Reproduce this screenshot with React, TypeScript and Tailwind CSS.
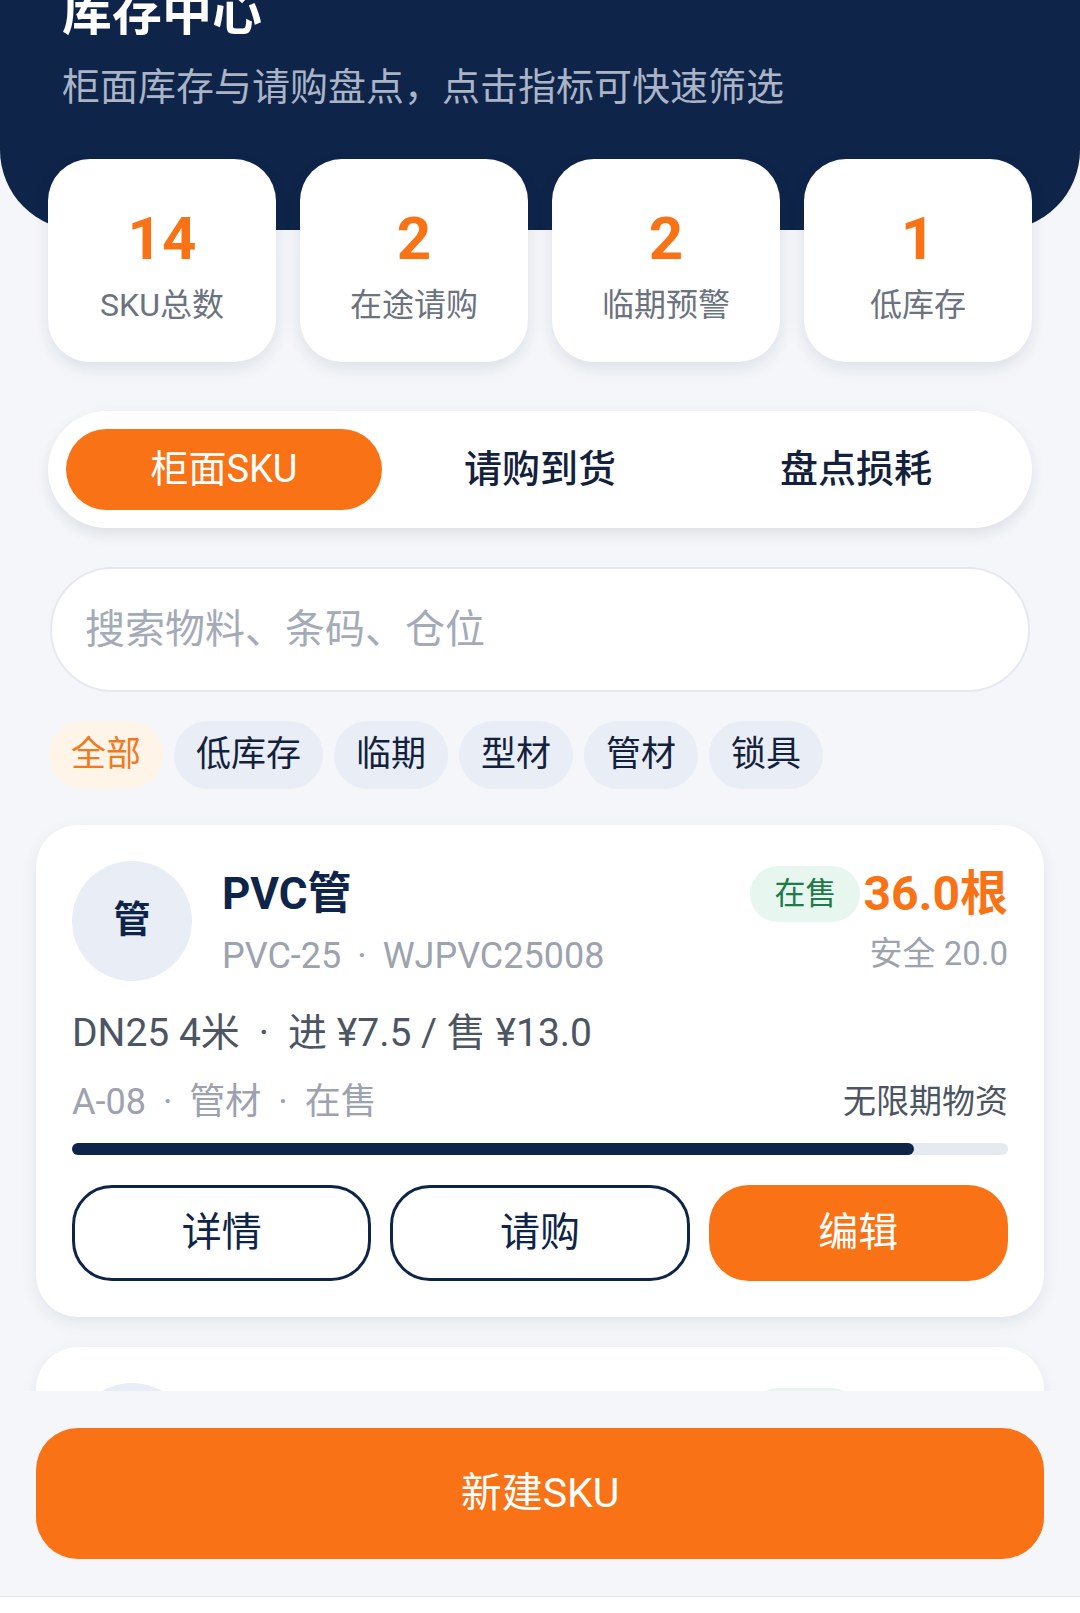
const stats = [
  { value: '14', label: 'SKU总数' },
  { value: '2', label: '在途请购' },
  { value: '2', label: '临期预警' },
  { value: '1', label: '低库存' },
];

const tabs = ['柜面SKU', '请购到货', '盘点损耗'];
const chips = ['全部', '低库存', '临期', '型材', '管材', '锁具'];

const items = [
  {
    icon: '管',
    name: 'PVC管',
    code: 'PVC-25',
    barcode: 'WJPVC25008',
    status: '在售',
    qty: '36.0根',
    safe: '20.0',
    spec: 'DN25 4米',
    cost: '7.5',
    price: '13.0',
    slot: 'A-08',
    category: '管材',
    expiry: '无限期物资',
    ratio: 0.9,
  },
  {
    icon: '型',
    name: '铝合金型材',
    code: 'AL-60',
    barcode: 'WJAL60012',
    status: '在售',
    qty: '18.0支',
    safe: '10.0',
    spec: '60系列 6米',
    cost: '42.0',
    price: '68.0',
    slot: 'B-03',
    category: '型材',
    expiry: '无限期物资',
    ratio: 0.6,
  },
];

type Item = (typeof items)[number];

const SkuCard = ({ item }: { item: Item }) => (
  <div className="mx-[36px] rounded-[42px] bg-white px-[36px] pt-[36px] pb-[36px] shadow-[0_6px_16px_rgba(15,36,73,0.08)]">
    <div className="flex items-start">
      <div className="flex h-[120px] w-[120px] shrink-0 items-center justify-center rounded-full bg-[#e9eef6] text-[37px] font-bold text-[#0f2449]">
        {item.icon}
      </div>
      <div className="ml-[30px] flex-1 pt-[8px]">
        <p className="text-[44px] leading-[50px] font-bold text-[#0f2449]">{item.name}</p>
        <p className="mt-[15px] text-[36px] leading-[44px] text-[#9ca3af]">
          {item.code}
          <span className="mx-[16px]">·</span>
          {item.barcode}
        </p>
      </div>
      <div className="flex flex-col items-end pt-[5px]">
        <div className="flex items-center gap-[3px]">
          <span className="rounded-full bg-[#e7f6ee] px-[24px] text-[31px] leading-[56px] text-[#1f7a4a]">
            {item.status}
          </span>
          <span className="text-[48px] leading-[56px] font-bold text-[#f97316]">{item.qty}</span>
        </div>
        <p className="mt-[12px] text-[33px] leading-[40px] text-[#9ca3af]">安全 {item.safe}</p>
      </div>
    </div>
    <p className="mt-[28px] text-[39px] leading-[48px] text-[#4b5563]">
      {item.spec}
      <span className="mx-[19px]">·</span>
      进 ¥{item.cost} / 售 ¥{item.price}
    </p>
    <div className="mt-[23px] flex items-center justify-between leading-[44px]">
      <p className="text-[36px] text-[#9ca3af]">
        {item.slot}
        <span className="mx-[17px]">·</span>
        {item.category}
        <span className="mx-[17px]">·</span>
        {item.status}
      </p>
      <p className="text-[33px] text-[#4b5563]">{item.expiry}</p>
    </div>
    <div className="mt-[19px] h-[12px] w-full rounded-full bg-[#e5e9f0]">
      <div className="h-full rounded-full bg-[#0f2449]" style={{ width: `${item.ratio * 100}%` }} />
    </div>
    <div className="mt-[30px] grid grid-cols-3 gap-[19px]">
      <button className="h-[96px] rounded-[40px] border-[3px] border-[#0f2449] bg-white text-[40px] text-[#0f2449]">
        详情
      </button>
      <button className="h-[96px] rounded-[40px] border-[3px] border-[#0f2449] bg-white text-[40px] text-[#0f2449]">
        请购
      </button>
      <button className="h-[96px] rounded-[40px] bg-[#f97316] text-[40px] text-white">编辑</button>
    </div>
  </div>
);

const App = () => {
  return (
    <div className="flex h-[1613px] w-[1080px] flex-col overflow-hidden bg-[#f4f6f9] font-['Roboto','Noto_Sans_CJK_SC',sans-serif]">
      <div className="flex-1 overflow-hidden">
        <div className="flex h-[230px] flex-col rounded-b-[80px] bg-[#0f2449] px-[62px]">
          <h1 className="mt-[-17px] text-[50px] leading-[60px] font-bold text-white">库存中心</h1>
          <p className="mt-[20px] text-[38px] leading-[48px] text-[#aab4c6]">
            柜面库存与请购盘点，点击指标可快速筛选
          </p>
        </div>

        <div className="mt-[-71px] grid grid-cols-4 gap-[24px] px-[48px]">
          {stats.map((s) => (
            <div
              key={s.label}
              className="flex h-[203px] flex-col items-center rounded-[42px] bg-white pt-[50px] shadow-[0_6px_16px_rgba(15,36,73,0.1)]"
            >
              <p className="text-[60px] leading-[60px] font-bold text-[#f97316]">{s.value}</p>
              <p className="mt-[16px] text-[32px] leading-[40px] text-[#6b7280]">{s.label}</p>
            </div>
          ))}
        </div>

        <div className="mx-[48px] mt-[49px] flex h-[117px] rounded-full bg-white p-[18px] shadow-[0_6px_14px_rgba(15,36,73,0.1)]">
          {tabs.map((t, i) => (
            <div
              key={t}
              className={
                i === 0
                  ? 'flex flex-1 items-center justify-center rounded-full bg-[#f97316] text-[38px] text-white'
                  : 'flex flex-1 items-center justify-center rounded-full text-[38px] font-medium text-[#13213c]'
              }
            >
              {t}
            </div>
          ))}
        </div>

        <div className="mx-[50px] mt-[39px] flex h-[125px] items-center rounded-full border-2 border-[#e6e9ef] bg-white pl-[33px]">
          <input
            className="w-full bg-transparent text-[40px] text-[#0f2449] outline-none placeholder:text-[#a3abb8]"
            placeholder="搜索物料、条码、仓位"
            readOnly
          />
        </div>

        <div className="mt-[29px] flex gap-[11px] px-[49px]">
          {chips.map((c, i) => (
            <span
              key={c}
              className={
                i === 0
                  ? 'flex h-[68px] items-center rounded-full bg-[#fff4e8] px-[22px] text-[35px] text-[#f07a22]'
                  : 'flex h-[68px] items-center rounded-full bg-[#e9eef6] px-[22px] text-[35px] text-[#13213c]'
              }
            >
              {c}
            </span>
          ))}
        </div>

        <div className="mt-[36px] flex flex-col gap-[30px]">
          {items.map((item) => (
            <SkuCard key={item.code} item={item} />
          ))}
        </div>
      </div>

      <div className="border-b border-[#e3e6eb] bg-[#f4f6f9] px-[36px] py-[37px]">
        <button className="h-[131px] w-full rounded-[42px] bg-[#f97316] text-[41px] text-white">
          新建SKU
        </button>
      </div>
      <div className="h-[16px] bg-white" />
    </div>
  );
};

export default App;
